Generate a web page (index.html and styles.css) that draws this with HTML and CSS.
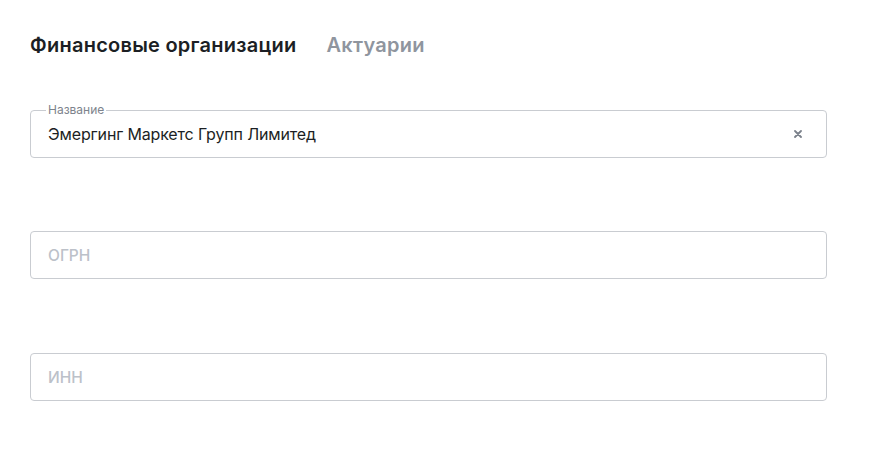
FILE: index.html
```html
<!DOCTYPE html>
<html lang="ru">
<head>
    <meta charset="UTF-8">
    <meta name="viewport" content="width=device-width, initial-scale=1.0">
    <title>Финансовые организации</title>
    <link rel="stylesheet" href="styles.css">
</head>
<body>
    <div class="page">
        <nav class="tabs">
            <span class="tab tab-active">Финансовые организации</span>
            <span class="tab">Актуарии</span>
        </nav>

        <div class="fields">
            <div class="field field-filled">
                <span class="field-label">Название</span>
                <span class="field-value">Эмергинг Маркетс Групп Лимитед</span>
                <span class="field-clear">
                    <svg width="8" height="8" viewBox="0 0 8 8">
                        <path d="M1 1 L7 7 M7 1 L1 7" stroke="#7b818b" stroke-width="1.8" stroke-linecap="round" />
                    </svg>
                </span>
            </div>
            <div class="field">
                <span class="field-placeholder">ОГРН</span>
            </div>
            <div class="field field-last">
                <span class="field-placeholder">ИНН</span>
            </div>
        </div>
    </div>
</body>
</html>
```

FILE: styles.css
```css
body {
    margin: 0;
    background-color: #fff;
    font-family: Inter, 'Noto Sans', sans-serif;
    color: #1c1f24;
}
.page {
    padding: 33px 42px 0 30px;
}
.tabs {
    display: flex;
    gap: 30px;
    height: 24px;
    align-items: center;
}
.tab {
    font-size: 20px;
    font-weight: 600;
    color: #8f959e;
    letter-spacing: 0.25px;
}
.tab-active {
    color: #1c1f24;
}
.fields {
    margin-top: 53px;
    display: flex;
    flex-direction: column;
    gap: 73px;
}
.field {
    position: relative;
    height: 48px;
    box-sizing: border-box;
    border: 1px solid #c9ccd1;
    border-radius: 4px;
    display: flex;
    align-items: center;
    padding: 0 17px;
}
.field-last {
    margin-top: 1px;
}
.field-label {
    position: absolute;
    top: -8px;
    left: 15px;
    padding: 0 2px;
    background-color: #fff;
    font-size: 12px;
    line-height: 14px;
    color: #7d838c;
}
.field-value {
    flex: 1;
    font-size: 16px;
    letter-spacing: -0.15px;
    color: #1c1f24;
}
.field-placeholder {
    font-size: 15.5px;
    font-weight: 500;
    color: #bcc1c9;
}
.field-clear {
    display: flex;
    margin-right: 7px;
}
```
